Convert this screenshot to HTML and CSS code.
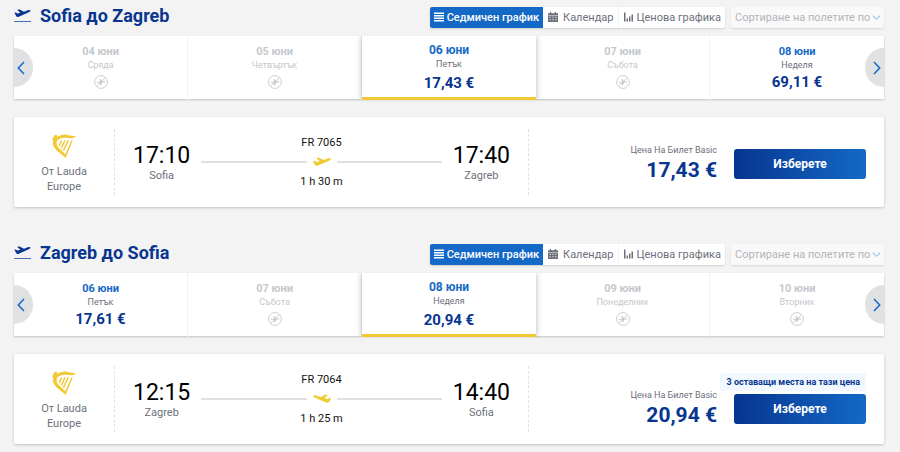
FILE: index.html
```html
<!DOCTYPE html>
<html lang="bg">
<head>
  <meta charset="UTF-8">
  <meta name="viewport" content="width=device-width, initial-scale=1.0">
  <title>Sofia - Zagreb</title>
  <link rel="stylesheet" href="styles.css">
</head>
<body>
  <!-- Shared icons -->
  <svg class="sprite" aria-hidden="true">
    <symbol id="plane" viewBox="0 0 18 10">
      <path d="M0 4.2 1.3 3.8 3.6 5.1 6.6 4.2 3.3 1 5.2.4 10.6 3 14.9 1.5C16.3 1 17.5 1.1 17.8 1.8 18.1 2.6 17.2 3.2 16 3.7L4.9 8.6C3.6 9.1 2.5 8.8 1.9 7.9Z"/>
    </symbol>
    <symbol id="no-flight" viewBox="0 0 14 14">
      <circle cx="7" cy="7" r="6.4" fill="none" stroke="currentColor" stroke-width="0.9"/>
      <path d="M3 11.2 11 3" stroke="currentColor" stroke-width="0.9"/>
      <path d="M3.2 6.3 4.5 7 6.2 6.7 5.3 4 6.4 4 8.2 6.5 10.6 6.3 11.4 7 10.6 7.6 8.3 7.6 6.9 10.2 6 10.2 6.4 7.8 4.5 7.7 3.5 8.6Z"/>
    </symbol>
    <symbol id="harp" viewBox="0 0 24 24">
      <path d="M1.8 2.6C2 1.3 3.3.4 4.5.8 5.5 1.2 5.3 2.3 5 3.1 8.3 1 11.7.1 15 .8 18.1 1.5 20.5 2.3 24 1.7 22.7 3.9 19.8 4.6 16.7 4.1 11.8 3.3 7.4 4 4.9 6.9 4.1 10.1 5 12.4 7.5 14.7 9.9 16.9 12 18.6 13.2 20.4L19.4 6.2 20.8 6.2 13.6 24C10.5 20.2 5 17.9 2.3 13.4.8 11 .6 8.9 1.4 6.3L0 5.8Z"/>
      <path d="M9.6 6.4 7.2 12M13 6.2 9.3 14.4M16.3 6.4 11.4 16.6" fill="none" stroke="currentColor" stroke-width="1.4"/>
    </symbol>
    <symbol id="bars" viewBox="0 0 10 9">
      <path d="M0 0H10V1.5H0ZM0 2.5H10V4H0ZM0 5H10V6.5H0ZM0 7.5H10V9H0Z"/>
    </symbol>
    <symbol id="calendar" viewBox="0 0 10 10">
      <path fill-rule="evenodd" d="M0 1.3H2V0H3.2V1.3H6.8V0H8V1.3H10V3H0ZM0 3.5H10V10H0ZM1.5 4.7V5.7H2.7V4.7ZM4.4 4.7V5.7H5.6V4.7ZM7.3 4.7V5.7H8.5V4.7ZM1.5 7.3V8.3H2.7V7.3ZM4.4 7.3V8.3H5.6V7.3ZM7.3 7.3V8.3H8.5V7.3Z"/>
    </symbol>
    <symbol id="chart" viewBox="0 0 10 10">
      <path d="M1 0.5H2.5V9.5H1ZM3.5 6.5H5V9.5H3.5ZM6 4.5H7.5V9.5H6ZM8.5 2.5H10V9.5H8.5Z"/>
    </symbol>
    <symbol id="chevron" viewBox="0 0 8 14">
      <path d="M7 1 1.3 7 7 13" fill="none" stroke="currentColor" stroke-width="1.5"/>
    </symbol>
  </svg>

  <main>
    <section class="journey">
      <header class="journey-header">
        <span class="departure-icon"><svg><use href="#plane"/></svg></span>
        <h2>Sofia до Zagreb</h2>
        <div class="views">
          <button class="view active" type="button"><svg><use href="#bars"/></svg>Седмичен график</button>
          <button class="view calendar" type="button"><svg><use href="#calendar"/></svg>Календар</button>
          <button class="view" type="button"><svg><use href="#chart"/></svg>Ценова графика</button>
        </div>
        <div class="sort">
          <select aria-label="Сортиране на полетите по"><option>Сортиране на полетите по</option></select>
          <svg><use href="#chevron"/></svg>
        </div>
      </header>

      <div class="week">
        <button class="arrow prev" type="button" aria-label="Назад"><svg><use href="#chevron"/></svg></button>
        <button class="day" type="button" disabled><b>04 юни</b><span>Сряда</span><svg><use href="#no-flight"/></svg></button>
        <button class="day" type="button" disabled><b>05 юни</b><span>Четвъртък</span><svg><use href="#no-flight"/></svg></button>
        <button class="day selected" type="button"><b>06 юни</b><span>Петък</span><strong>17,43 €</strong></button>
        <button class="day" type="button" disabled><b>07 юни</b><span>Събота</span><svg><use href="#no-flight"/></svg></button>
        <button class="day" type="button"><b>08 юни</b><span>Неделя</span><strong>69,11 €</strong></button>
        <button class="arrow next" type="button" aria-label="Напред"><svg><use href="#chevron"/></svg></button>
      </div>

      <article class="flight">
        <div class="airline"><svg><use href="#harp"/></svg><span>От Lauda Europe</span></div>
        <div class="route">
          <div class="stop"><time>17:10</time><span>Sofia</span></div>
          <div class="leg">
            <span>FR 7065</span>
            <div class="track"><svg><use href="#plane"/></svg></div>
            <span>1 h 30 m</span>
          </div>
          <div class="stop"><time>17:40</time><span>Zagreb</span></div>
        </div>
        <div class="fare">
          <div class="price"><span>Цена На Билет Basic</span><strong>17,43 €</strong></div>
          <button class="choose" type="button">Изберете</button>
        </div>
      </article>
    </section>

    <section class="journey">
      <header class="journey-header">
        <span class="departure-icon"><svg><use href="#plane"/></svg></span>
        <h2>Zagreb до Sofia</h2>
        <div class="views">
          <button class="view active" type="button"><svg><use href="#bars"/></svg>Седмичен график</button>
          <button class="view calendar" type="button"><svg><use href="#calendar"/></svg>Календар</button>
          <button class="view" type="button"><svg><use href="#chart"/></svg>Ценова графика</button>
        </div>
        <div class="sort">
          <select aria-label="Сортиране на полетите по"><option>Сортиране на полетите по</option></select>
          <svg><use href="#chevron"/></svg>
        </div>
      </header>

      <div class="week">
        <button class="arrow prev" type="button" aria-label="Назад"><svg><use href="#chevron"/></svg></button>
        <button class="day" type="button"><b>06 юни</b><span>Петък</span><strong>17,61 €</strong></button>
        <button class="day" type="button" disabled><b>07 юни</b><span>Събота</span><svg><use href="#no-flight"/></svg></button>
        <button class="day selected" type="button"><b>08 юни</b><span>Неделя</span><strong>20,94 €</strong></button>
        <button class="day" type="button" disabled><b>09 юни</b><span>Понеделник</span><svg><use href="#no-flight"/></svg></button>
        <button class="day" type="button" disabled><b>10 юни</b><span>Вторник</span><svg><use href="#no-flight"/></svg></button>
        <button class="arrow next" type="button" aria-label="Напред"><svg><use href="#chevron"/></svg></button>
      </div>

      <article class="flight">
        <div class="airline"><svg><use href="#harp"/></svg><span>От Lauda Europe</span></div>
        <div class="route">
          <div class="stop"><time>12:15</time><span>Zagreb</span></div>
          <div class="leg">
            <span>FR 7064</span>
            <div class="track landing"><svg><use href="#plane"/></svg></div>
            <span>1 h 25 m</span>
          </div>
          <div class="stop"><time>14:40</time><span>Sofia</span></div>
        </div>
        <div class="fare few-left">
          <div class="seats">3 оставащи места на тази цена</div>
          <div class="price"><span>Цена На Билет Basic</span><strong>20,94 €</strong></div>
          <button class="choose" type="button">Изберете</button>
        </div>
      </article>
    </section>
  </main>
</body>
</html>
```

FILE: styles.css
```css
* {
  box-sizing: border-box;
}
body {
  margin: 0;
  background: #f3f3f3;
  color: #6b707b;
  font-family: Roboto, sans-serif;
  font-size: 11px;
}
button, select {
  font-family: inherit;
  border: 0;
  padding: 0;
  cursor: pointer;
}
svg {
  display: block;
  flex: none;
  fill: currentColor;
}
.sprite {
  position: absolute;
  width: 0;
  height: 0;
}
main {
  padding: 0 16px 0 14px;
}
.journey {
  padding-bottom: 30px;
}

/* Title and view switch */
.journey-header {
  display: flex;
  align-items: center;
  height: 36px;
  padding-bottom: 2px;
  color: #073590;
}
.departure-icon {
  margin-bottom: 4px;
  padding-bottom: 3px;
  border-bottom: 1px solid #4a6cb0;
}
.departure-icon svg {
  width: 17px;
  height: 9px;
}
h2 {
  margin: 0 auto 2px 9px;
  font-size: 18px;
  line-height: 24px;
  font-weight: 700;
}
.views {
  display: flex;
  height: 21px;
  margin-right: 6px;
  border-radius: 2px;
  background: #fff;
  box-shadow: 0 1px 2px rgba(0, 0, 0, 0.15);
}
.view {
  display: flex;
  align-items: center;
  gap: 3px;
  padding: 0 4px;
  background: none;
  color: #6b707b;
  font-size: 11px;
  border-right: 1px solid #f3f3f3;
}
.view:last-child {
  border-right: 0;
}
.view svg {
  width: 10px;
  height: 10px;
}
.view.calendar {
  gap: 5px;
  padding: 0 5px;
}
.view.active {
  background: #1469c7;
  color: #fff;
  font-weight: 500;
  border-right: 0;
  border-radius: 2px 0 0 2px;
}
.sort {
  position: relative;
  height: 21px;
  border-radius: 2px;
  background: #f9f9f9;
  box-shadow: 0 1px 2px rgba(0, 0, 0, 0.12);
}
.sort select {
  appearance: none;
  height: 21px;
  padding: 0 13px 0 4px;
  background: none;
  color: #b2b5ba;
  font-size: 11px;
}
.sort svg {
  position: absolute;
  right: 5px;
  top: 6px;
  width: 5px;
  height: 9px;
  color: #72a8e2;
  transform: rotate(-90deg);
  pointer-events: none;
}

/* Week strip */
.week {
  position: relative;
  display: grid;
  grid-template-columns: repeat(5, 1fr);
  height: 63px;
  background: #fff;
  box-shadow: 0 1px 2px rgba(0, 0, 0, 0.2);
}
.day {
  display: flex;
  flex-direction: column;
  align-items: center;
  padding-top: 9px;
  background: none;
  border-right: 1px solid #f3f3f3;
  color: #6b707b;
}
.day:nth-last-child(2) {
  border-right: 0;
}
.day b {
  color: #1469c7;
  font-size: 11px;
  line-height: 14px;
}
.day span {
  font-size: 9px;
  line-height: 12px;
}
.day strong {
  color: #073590;
  font-size: 15px;
  line-height: 23px;
}
.day svg {
  width: 14px;
  height: 14px;
  margin-top: 4px;
}
.day:disabled, .day:disabled b {
  color: #c4c8cd;
}
.day.selected {
  padding-top: 7px;
  background: #fff;
  border-right: 0;
  border-bottom: 3px solid #f1c933;
  box-shadow: 0 0 6px rgba(0, 0, 0, 0.3);
  clip-path: inset(0 -8px);
}
.day.selected b {
  font-size: 12px;
  line-height: 15px;
}
.day.selected strong {
  line-height: 27px;
}
.arrow {
  position: absolute;
  top: 12px;
  width: 19px;
  height: 39px;
  display: flex;
  align-items: center;
  background: #dfe1e3;
  color: #1469c7;
}
.arrow svg {
  width: 8px;
  height: 14px;
}
.prev {
  left: 0;
  padding-left: 3px;
  border-radius: 0 20px 20px 0;
}
.next {
  right: 0;
  padding-left: 8px;
  border-radius: 20px 0 0 20px;
}
.next svg {
  transform: scaleX(-1);
}

/* Flight card */
.flight {
  display: grid;
  grid-template-columns: 100px 415fr 355fr;
  align-items: center;
  height: 90px;
  margin-top: 18px;
  background: #fff;
  border-radius: 2px;
  box-shadow: 0 1px 3px rgba(0, 0, 0, 0.2);
}
.airline {
  display: flex;
  flex-direction: column;
  align-items: center;
  gap: 6px;
  padding: 3px 20px 0;
  line-height: 15px;
  text-align: center;
}
.airline svg {
  width: 24px;
  height: 24px;
  color: #f1c933;
}
.route {
  display: flex;
  align-items: center;
  gap: 11px;
  height: 66px;
  padding: 0 18px;
  border-left: 1px dashed #e0e1e3;
  border-right: 1px dashed #e0e1e3;
}
.stop {
  display: flex;
  flex-direction: column;
  align-items: center;
  line-height: 14px;
}
.stop time {
  color: #000;
  font-size: 23px;
  line-height: 27px;
}
.leg {
  flex: 1;
  display: flex;
  flex-direction: column;
  gap: 6px;
  color: #111;
  line-height: 13px;
  text-align: center;
}
.track {
  display: flex;
  align-items: center;
  gap: 6px;
  height: 14px;
  color: #f1c933;
}
.track::before, .track::after {
  content: '';
  flex: 1;
  height: 2px;
  background: #e0e0e0;
}
.track svg {
  width: 18px;
  height: 10px;
}
.landing svg {
  transform: scaleX(-1);
}
.fare {
  display: grid;
  grid-template-columns: 1fr 132px;
  align-items: center;
  gap: 3px 17px;
  padding: 4px 18px 0 0;
}
.fare.few-left {
  padding: 0 18px 1px 0;
}
.seats {
  grid-column: 1 / -1;
  justify-self: end;
  padding: 0 6px;
  border-radius: 2px;
  background: #f1f8fe;
  color: #073590;
  font-size: 9px;
  line-height: 18px;
  font-weight: 700;
}
.price {
  display: flex;
  flex-direction: column;
  height: 30px;
  justify-content: center;
  align-items: flex-end;
}
.price span {
  font-size: 9px;
  line-height: 12px;
}
.price strong {
  color: #073590;
  font-size: 21px;
  line-height: 28px;
}
.choose {
  height: 30px;
  border-radius: 3px;
  background: linear-gradient(90deg, #073590, #1469c7);
  color: #fff;
  font-size: 12px;
  font-weight: 700;
}
```
